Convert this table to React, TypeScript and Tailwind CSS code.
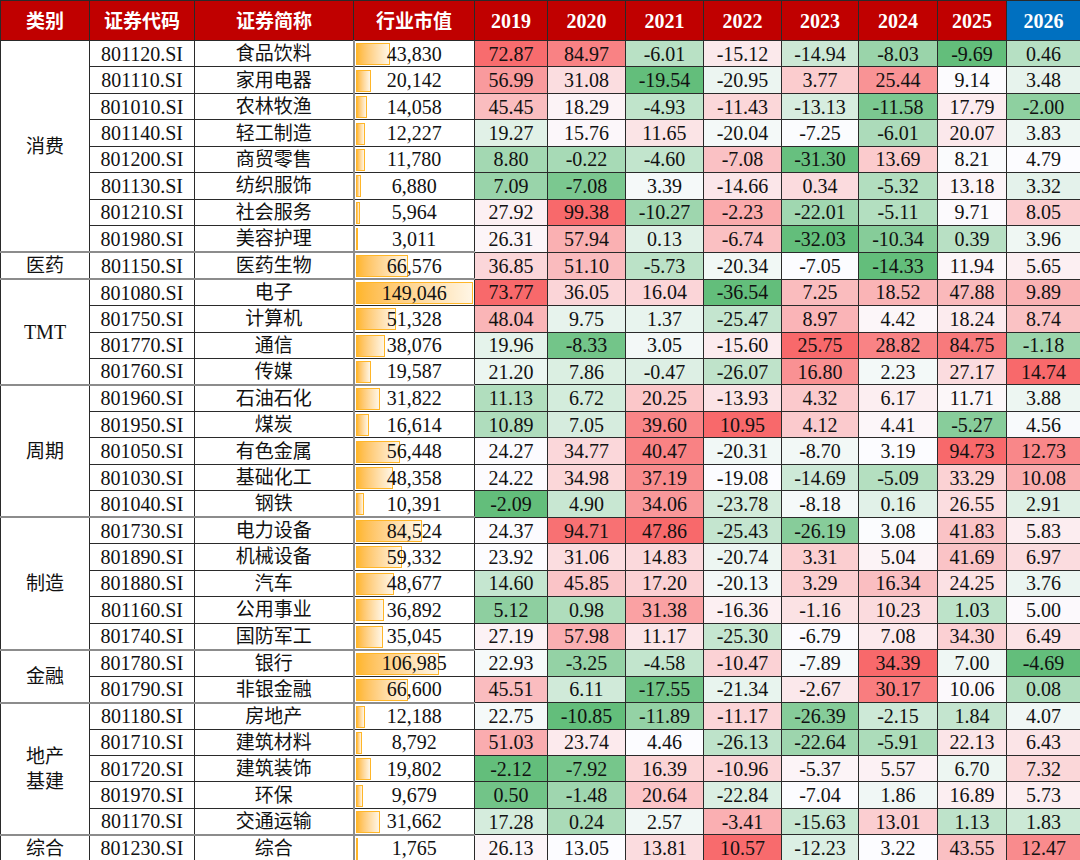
import React from "react";

// 一行数据：证券代码、简称、行业市值、2019-2026 涨跌幅
type Row = {
  code: string;
  name: string;
  cap: number;
  vals: number[];
};

type Group = {
  label: string;
  rows: Row[];
};

const r = (code: string, name: string, cap: number, vals: number[]): Row => ({
  code,
  name,
  cap,
  vals,
});

const groups: Group[] = [
  {
    label: "消费",
    rows: [
      r("801120.SI", "食品饮料", 43830, [72.87, 84.97, -6.01, -15.12, -14.94, -8.03, -9.69, 0.46]),
      r("801110.SI", "家用电器", 20142, [56.99, 31.08, -19.54, -20.95, 3.77, 25.44, 9.14, 3.48]),
      r("801010.SI", "农林牧渔", 14058, [45.45, 18.29, -4.93, -11.43, -13.13, -11.58, 17.79, -2.0]),
      r("801140.SI", "轻工制造", 12227, [19.27, 15.76, 11.65, -20.04, -7.25, -6.01, 20.07, 3.83]),
      r("801200.SI", "商贸零售", 11780, [8.8, -0.22, -4.6, -7.08, -31.3, 13.69, 8.21, 4.79]),
      r("801130.SI", "纺织服饰", 6880, [7.09, -7.08, 3.39, -14.66, 0.34, -5.32, 13.18, 3.32]),
      r("801210.SI", "社会服务", 5964, [27.92, 99.38, -10.27, -2.23, -22.01, -5.11, 9.71, 8.05]),
      r("801980.SI", "美容护理", 3011, [26.31, 57.94, 0.13, -6.74, -32.03, -10.34, 0.39, 3.96]),
    ],
  },
  {
    label: "医药",
    rows: [r("801150.SI", "医药生物", 66576, [36.85, 51.1, -5.73, -20.34, -7.05, -14.33, 11.94, 5.65])],
  },
  {
    label: "TMT",
    rows: [
      r("801080.SI", "电子", 149046, [73.77, 36.05, 16.04, -36.54, 7.25, 18.52, 47.88, 9.89]),
      r("801750.SI", "计算机", 51328, [48.04, 9.75, 1.37, -25.47, 8.97, 4.42, 18.24, 8.74]),
      r("801770.SI", "通信", 38076, [19.96, -8.33, 3.05, -15.6, 25.75, 28.82, 84.75, -1.18]),
      r("801760.SI", "传媒", 19587, [21.2, 7.86, -0.47, -26.07, 16.8, 2.23, 27.17, 14.74]),
    ],
  },
  {
    label: "周期",
    rows: [
      r("801960.SI", "石油石化", 31822, [11.13, 6.72, 20.25, -13.93, 4.32, 6.17, 11.71, 3.88]),
      r("801950.SI", "煤炭", 16614, [10.89, 7.05, 39.6, 10.95, 4.12, 4.41, -5.27, 4.56]),
      r("801050.SI", "有色金属", 56448, [24.27, 34.77, 40.47, -20.31, -8.7, 3.19, 94.73, 12.73]),
      r("801030.SI", "基础化工", 48358, [24.22, 34.98, 37.19, -19.08, -14.69, -5.09, 33.29, 10.08]),
      r("801040.SI", "钢铁", 10391, [-2.09, 4.9, 34.06, -23.78, -8.18, 0.16, 26.55, 2.91]),
    ],
  },
  {
    label: "制造",
    rows: [
      r("801730.SI", "电力设备", 84524, [24.37, 94.71, 47.86, -25.43, -26.19, 3.08, 41.83, 5.83]),
      r("801890.SI", "机械设备", 59332, [23.92, 31.06, 14.83, -20.74, 3.31, 5.04, 41.69, 6.97]),
      r("801880.SI", "汽车", 48677, [14.6, 45.85, 17.2, -20.13, 3.29, 16.34, 24.25, 3.76]),
      r("801160.SI", "公用事业", 36892, [5.12, 0.98, 31.38, -16.36, -1.16, 10.23, 1.03, 5.0]),
      r("801740.SI", "国防军工", 35045, [27.19, 57.98, 11.17, -25.3, -6.79, 7.08, 34.3, 6.49]),
    ],
  },
  {
    label: "金融",
    rows: [
      r("801780.SI", "银行", 106985, [22.93, -3.25, -4.58, -10.47, -7.89, 34.39, 7.0, -4.69]),
      r("801790.SI", "非银金融", 66600, [45.51, 6.11, -17.55, -21.34, -2.67, 30.17, 10.06, 0.08]),
    ],
  },
  {
    label: "地产\n基建",
    rows: [
      r("801180.SI", "房地产", 12188, [22.75, -10.85, -11.89, -11.17, -26.39, -2.15, 1.84, 4.07]),
      r("801710.SI", "建筑材料", 8792, [51.03, 23.74, 4.46, -26.13, -22.64, -5.91, 22.13, 6.43]),
      r("801720.SI", "建筑装饰", 19802, [-2.12, -7.92, 16.39, -10.96, -5.37, 5.57, 6.7, 7.32]),
      r("801970.SI", "环保", 9679, [0.5, -1.48, 20.64, -22.84, -7.04, 1.86, 16.89, 5.73]),
      r("801170.SI", "交通运输", 31662, [17.28, 0.24, 2.57, -3.41, -15.63, 13.01, 1.13, 1.83]),
    ],
  },
  {
    label: "综合",
    rows: [r("801230.SI", "综合", 1765, [26.13, 13.05, 13.81, 10.57, -12.23, 3.22, 43.55, 12.47])],
  },
];

const years = ["2019", "2020", "2021", "2022", "2023", "2024", "2025", "2026"];

const allRows = groups.flatMap((g) => g.rows);
const maxCap = Math.max(...allRows.map((x) => x.cap));

const colStats = years.map((_, i) => {
  const vs = allRows.map((x) => x.vals[i]).sort((a, b) => a - b);
  const mid = i === 6 ? 8.5 : vs[Math.floor(vs.length / 2)];
  return { min: vs[0], mid, max: vs[vs.length - 1] };
});

const RED = [248, 105, 107];
const WHITE = [252, 252, 255];
const GREEN = [99, 190, 123];

function cellColor(v: number, i: number) {
  const { min, mid, max } = colStats[i];
  let t = 0;
  let end = WHITE;
  if (v >= mid) {
    t = max === mid ? 0 : (v - mid) / (max - mid);
    end = RED;
  } else {
    t = mid === min ? 0 : (mid - v) / (mid - min);
    end = GREEN;
  }
  const c = WHITE.map((w, k) => Math.round(w + (end[k] - w) * t));
  return `rgb(${c[0]},${c[1]},${c[2]})`;
}

const fmt = (n: number) => n.toLocaleString("en-US");

export default function App() {
  return (
    <div className="w-[1080px] h-[860px] bg-white overflow-hidden">
      <table className="w-[1080px] table-fixed border-collapse font-['Liberation_Serif','Noto_Sans_CJK_SC',serif] text-[20px] text-[#111]">
        <colgroup>
          <col className="w-[89px]" />
          <col className="w-[105px]" />
          <col className="w-[159px]" />
          <col className="w-[121px]" />
          <col className="w-[73px]" />
          <col className="w-[78px]" />
          <col className="w-[78px]" />
          <col className="w-[78px]" />
          <col className="w-[77px]" />
          <col className="w-[79px]" />
          <col className="w-[69px]" />
          <col className="w-[74px]" />
        </colgroup>
        <thead>
          <tr className="h-[40px] text-white">
            {["类别", "证券代码", "证券简称", "行业市值"].map((h) => (
              <th
                key={h}
                className="bg-[#c00000] border border-[#2a2a2a] font-['Noto_Sans_CJK_SC',sans-serif] font-bold text-[19px] p-0"
              >
                {h}
              </th>
            ))}
            {years.map((y) => (
              <th
                key={y}
                className={`border border-[#2a2a2a] font-bold text-[20px] p-0 ${
                  y === "2026" ? "bg-[#0070c0]" : "bg-[#c00000]"
                }`}
              >
                {y}
              </th>
            ))}
          </tr>
        </thead>
        <tbody>
          {groups.map((g, gi) =>
            g.rows.map((row, ri) => {
              const groupTop = gi > 0 && ri === 0;
              const topCls = groupTop ? "border-t-2 border-t-[#8c8c8c]" : "";
              return (
                <tr key={row.code} className="h-[26.45px] leading-none">
                  {ri === 0 && (
                    <td
                      rowSpan={g.rows.length}
                      className={`border border-[#2a2a2a] text-center p-0 whitespace-pre-line leading-[25px] ${
                        g.label === "TMT" ? "text-[20px]" : "text-[19px]"
                      } ${topCls}`}
                    >
                      {g.label}
                    </td>
                  )}
                  <td className={`border border-[#2a2a2a] text-center p-0 ${topCls}`}>{row.code}</td>
                  <td className={`border border-[#2a2a2a] text-center p-0 text-[19px] ${topCls}`}>
                    {row.name}
                  </td>
                  <td
                    className={`border border-[#2a2a2a] border-l-2 border-l-[#8c8c8c] p-0 ${topCls}`}
                  >
                    <div className="relative h-[25px] flex items-center justify-center">
                      <div
                        className="absolute left-[1px] top-[2px] bottom-[1px] border border-[#ffb628] bg-linear-to-r from-[#ffb628] to-[#fff6e6]"
                        style={{ width: `${(row.cap / maxCap) * 117}px` }}
                      />
                      <span className="relative">{fmt(row.cap)}</span>
                    </div>
                  </td>
                  {row.vals.map((v, i) => (
                    <td
                      key={i}
                      className="border border-[#2a2a2a] text-center p-0"
                      style={{ backgroundColor: cellColor(v, i) }}
                    >
                      {v.toFixed(2)}
                    </td>
                  ))}
                </tr>
              );
            })
          )}
        </tbody>
      </table>
    </div>
  );
}
